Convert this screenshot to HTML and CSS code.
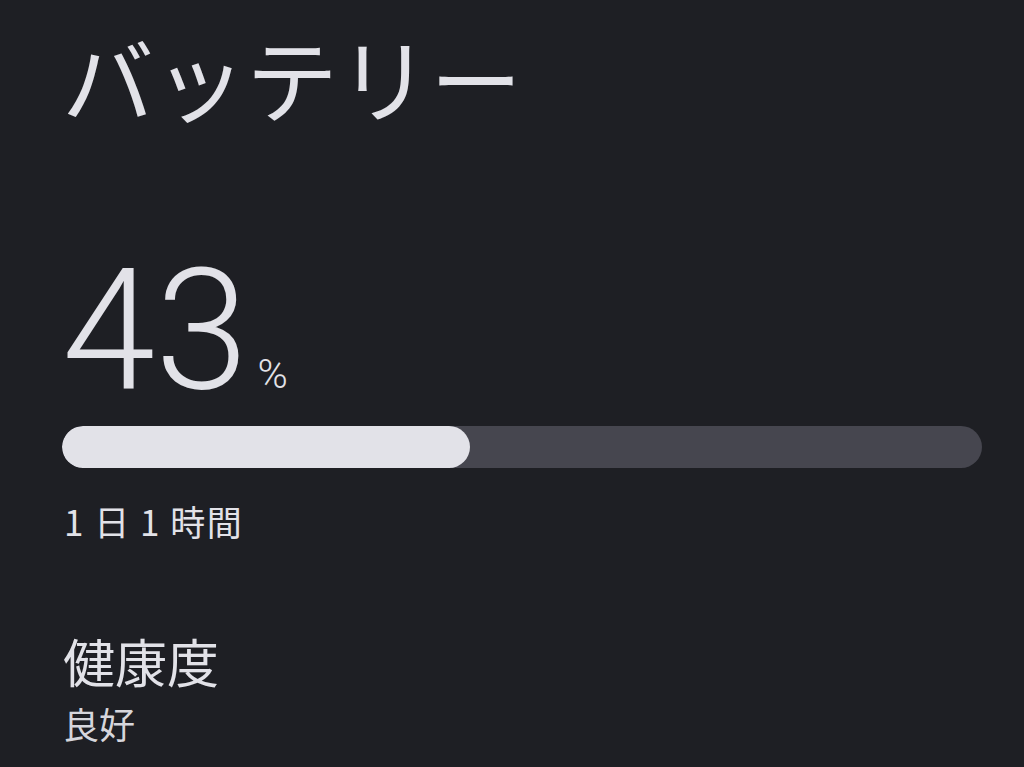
FILE: index.html
```html
<!DOCTYPE html>
<html lang="ja">
<head>
<meta charset="utf-8">
<link rel="stylesheet" href="styles.css">
</head>
<body>
<main class="page">
  <h1 class="title">バッテリー</h1>
  <div class="level">
    <span class="level-num">43</span><span class="level-unit">%</span>
  </div>
  <div class="bar"><div class="bar-fill" style="width:44.3%"></div></div>
  <div class="remain">1 日 1 時間</div>
  <section class="health">
    <div class="health-label">健康度</div>
    <div class="health-value">良好</div>
  </section>
</main>
</body>
</html>
```
FILE: styles.css
```css
html, body {
  margin: 0;
  padding: 0;
  background: #1e1f24;
  height: 100%;
  overflow: hidden;
}
body {
  font-family: "Noto Sans CJK JP", "Noto Sans", sans-serif;
  color: #e2e2e8;
}
.page {
  padding: 16px 42px 0 62px;
  display: flex;
  flex-direction: column;
}
.title {
  margin: 0;
  font-size: 92px;
  font-weight: 400;
  line-height: 120px;
  letter-spacing: 0;
}
.level {
  margin-top: 111px;
  display: flex;
  align-items: baseline;
  line-height: 1;
  font-family: Roboto, "Noto Sans", sans-serif;
}
.level-num {
  font-size: 168px;
  font-weight: 300;
  letter-spacing: 0;
}
.level-unit {
  font-size: 41px;
  font-weight: 300;
  margin-left: 9px;
}
.bar {
  margin-top: 11px;
  height: 42px;
  border-radius: 21px;
  background: #46464f;
  overflow: hidden;
}
.bar-fill {
  height: 100%;
  border-radius: 21px;
  background: #e2e2e8;
}
.remain {
  margin-top: 28px;
  padding-left: 2px;
  font-size: 35px;
  line-height: 50px;
  letter-spacing: 1.5px;
}
.health {
  margin-top: 83px;
  padding-left: 1px;
}
.health-label {
  font-size: 52px;
  line-height: 64px;
}
.health-value {
  margin-top: 6px;
  font-size: 36px;
  line-height: 48px;
  color: #d6d6dc;
}
```
